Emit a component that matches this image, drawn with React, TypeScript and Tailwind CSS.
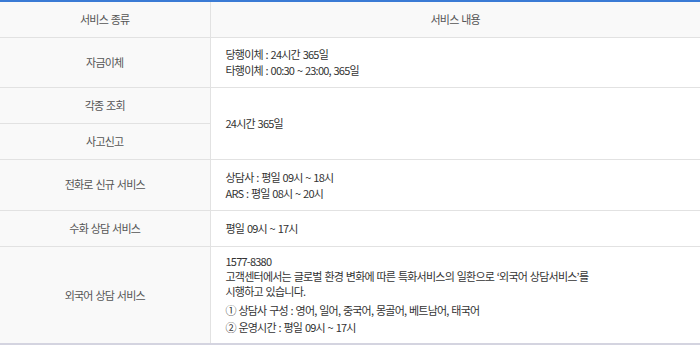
import React from 'react';

const font = { fontFamily: '"Noto Sans CJK KR", "Noto Sans", sans-serif' };

const App: React.FC = () => {
  return (
    <div className="w-[700px] h-[347px] bg-white" style={font}>
      <table className="w-full border-collapse border-t-2 border-t-[#3a7bd5] border-b-2 border-b-[#d4d4e0] text-[11px] tracking-[-0.07em] [word-spacing:1px]">
        <colgroup>
          <col className="w-[210px]" />
          <col />
        </colgroup>
        <thead>
          <tr className="h-[36px] bg-[#f9f9f9] border-b border-[#e2e2e2]">
            <th className="font-normal text-[#555] border-r border-[#e2e2e2]">서비스 종류</th>
            <th className="font-normal text-[#555]">서비스 내용</th>
          </tr>
        </thead>
        <tbody className="text-[#333]">
          <tr className="h-[50px] border-b border-[#e2e2e2]">
            <td className="bg-[#f9f9f9] text-center text-[#555] border-r border-[#e2e2e2]">자금이체</td>
            <td className="pl-[15px] leading-[16px]">
              <div>당행이체 : 24시간 365일</div>
              <div>타행이체 : 00:30 ~ 23:00, 365일</div>
            </td>
          </tr>
          <tr className="h-[36px] border-b border-[#e2e2e2]">
            <td className="bg-[#f9f9f9] text-center text-[#555] border-r border-[#e2e2e2]">각종 조회</td>
            <td rowSpan={2} className="pl-[15px] border-b border-[#e2e2e2]">24시간 365일</td>
          </tr>
          <tr className="h-[36px] border-b border-[#e2e2e2]">
            <td className="bg-[#f9f9f9] text-center text-[#555] border-r border-[#e2e2e2]">사고신고</td>
          </tr>
          <tr className="h-[51px] border-b border-[#e2e2e2]">
            <td className="bg-[#f9f9f9] text-center text-[#555] border-r border-[#e2e2e2]">전화로 신규 서비스</td>
            <td className="pl-[15px] leading-[16px]">
              <div>상담사 : 평일 09시 ~ 18시</div>
              <div>ARS : 평일 08시 ~ 20시</div>
            </td>
          </tr>
          <tr className="h-[36px] border-b border-[#e2e2e2]">
            <td className="bg-[#f9f9f9] text-center text-[#555] border-r border-[#e2e2e2]">수화 상담 서비스</td>
            <td className="pl-[15px]">평일 09시 ~ 17시</td>
          </tr>
          <tr className="h-[98px]">
            <td className="bg-[#f9f9f9] text-center text-[#555] border-r border-[#e2e2e2]">외국어 상담 서비스</td>
            <td className="pl-[15px]">
              <div className="leading-[15px]">
                <div>1577-8380</div>
                <div>고객센터에서는 글로벌 환경 변화에 따른 특화서비스의 일환으로 ‘외국어 상담서비스’를</div>
                <div>시행하고 있습니다.</div>
              </div>
              <div className="mt-[3px] leading-[17px]">
                <div>① 상담사 구성 : 영어, 일어, 중국어, 몽골어, 베트남어, 태국어</div>
                <div>② 운영시간 : 평일 09시 ~ 17시</div>
              </div>
            </td>
          </tr>
        </tbody>
      </table>
    </div>
  );
};

export default App;
